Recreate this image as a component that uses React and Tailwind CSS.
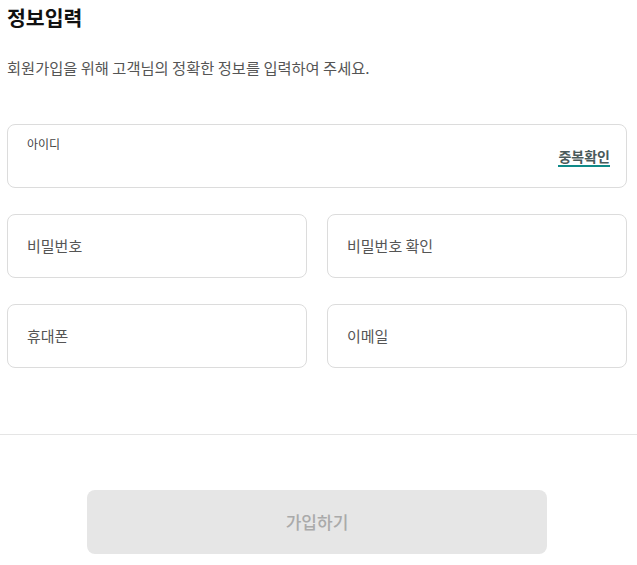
export default function App() {
  const font = { fontFamily: '"Noto Sans CJK KR", "Noto Sans", sans-serif' };
  return (
    <div className="w-[637px] h-[565px] bg-white overflow-hidden" style={font}>
      <div className="pl-[7px] pr-[10px]">
        <h1 className="text-[20.5px] font-bold text-[#111] leading-[24px] pt-[5px]">정보입력</h1>
        <p className="mt-[28px] text-[15.3px] text-[#555] leading-[20px]">
          회원가입을 위해 고객님의 정확한 정보를 입력하여 주세요.
        </p>

        <div className="mt-[47px] h-[64px] rounded-[8px] border border-[#dcdcdc] relative px-[19px]">
          <div className="pt-[11px] text-[12px] leading-[16px] text-[#444]">아이디</div>
          <button className="absolute right-[16px] top-[22px] text-[14px] font-bold text-[#4a5a5a] leading-[18px] border-b-2 border-[#0f8a88]">
            중복확인
          </button>
        </div>

        <div className="mt-[26px] grid grid-cols-[300px_300px] gap-x-[20px] gap-y-[26px]">
          {['비밀번호', '비밀번호 확인', '휴대폰', '이메일'].map((t) => (
            <div
              key={t}
              className="h-[64px] rounded-[8px] border border-[#dcdcdc] flex items-center px-[19px] text-[15px] text-[#555]"
            >
              {t}
            </div>
          ))}
        </div>
      </div>

      <div className="mt-[66px] border-t border-[#e5e5e5]" />

      <div className="mt-[55px] flex justify-center pr-[3px]">
        <button className="w-[460px] h-[64px] rounded-[8px] bg-[#e6e6e6] text-[17px] text-[#aaa] font-medium">
          가입하기
        </button>
      </div>
    </div>
  );
}
